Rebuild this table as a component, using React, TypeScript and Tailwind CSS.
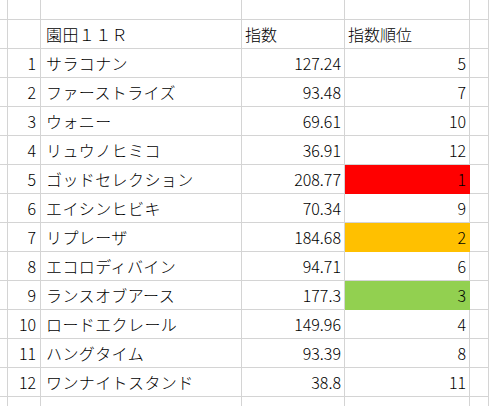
import React from "react"

type Horse = {
  no: number
  name: string
  score: string
  rank: number
  fill?: string
}

const horses: Horse[] = [
  { no: 1, name: "サラコナン", score: "127.24", rank: 5 },
  { no: 2, name: "ファーストライズ", score: "93.48", rank: 7 },
  { no: 3, name: "ウォニー", score: "69.61", rank: 10 },
  { no: 4, name: "リュウノヒミコ", score: "36.91", rank: 12 },
  { no: 5, name: "ゴッドセレクション", score: "208.77", rank: 1, fill: "bg-[#ff0000]" },
  { no: 6, name: "エイシンヒビキ", score: "70.34", rank: 9 },
  { no: 7, name: "リプレーザ", score: "184.68", rank: 2, fill: "bg-[#ffc000]" },
  { no: 8, name: "エコロディバイン", score: "94.71", rank: 6 },
  { no: 9, name: "ランスオブアース", score: "177.3", rank: 3, fill: "bg-[#92d050]" },
  { no: 10, name: "ロードエクレール", score: "149.96", rank: 4 },
  { no: 11, name: "ハングタイム", score: "93.39", rank: 8 },
  { no: 12, name: "ワンナイトスタンド", score: "38.8", rank: 11 },
]

const cell = "border-r border-b border-[#d4d4d4] flex items-center overflow-hidden whitespace-nowrap"

function Row({
  height,
  a,
  b,
  c,
  d,
  dFill,
}: {
  height: string
  a?: React.ReactNode
  b?: React.ReactNode
  c?: React.ReactNode
  d?: React.ReactNode
  dFill?: string
}) {
  return (
    <div className={`flex ${height}`}>
      <div className={`${cell} w-[8px] shrink-0`} />
      <div className={`${cell} w-[33px] shrink-0 justify-end pr-[4px]`}>{a}</div>
      <div className={`${cell} w-[201px] shrink-0 pl-[5px] tracking-[0.4px]`}>{b}</div>
      <div className={`${cell} w-[103px] shrink-0 pr-[3px] justify-end`}>{c}</div>
      <div
        className={`${cell} w-[125px] shrink-0 pr-[3px] justify-end ${
          dFill ? `${dFill} border-r-transparent border-b-transparent` : ""
        }`}
      >
        {d}
      </div>
      <div className={`${cell} flex-1`} />
    </div>
  )
}

export default function App() {
  return (
    <div
      className="w-[489px] h-[406px] bg-white text-black text-[16px] font-light leading-none overflow-hidden"
      style={{ fontFamily: '"Noto Sans CJK JP", "Noto Sans", sans-serif' }}
    >
      <Row height="h-[20px]" />
      <Row
        height="h-[29px]"
        b={<span>園田１１Ｒ</span>}
        c={<span className="w-full pl-[3px]">指数</span>}
        d={<span className="w-full pl-[3px]">指数順位</span>}
      />
      {horses.map((h) => (
        <Row
          key={h.no}
          height="h-[29px]"
          a={h.no}
          b={h.name}
          c={h.score}
          d={h.rank}
          dFill={h.fill}
        />
      ))}
      <Row height="h-[20px]" />
    </div>
  )
}
